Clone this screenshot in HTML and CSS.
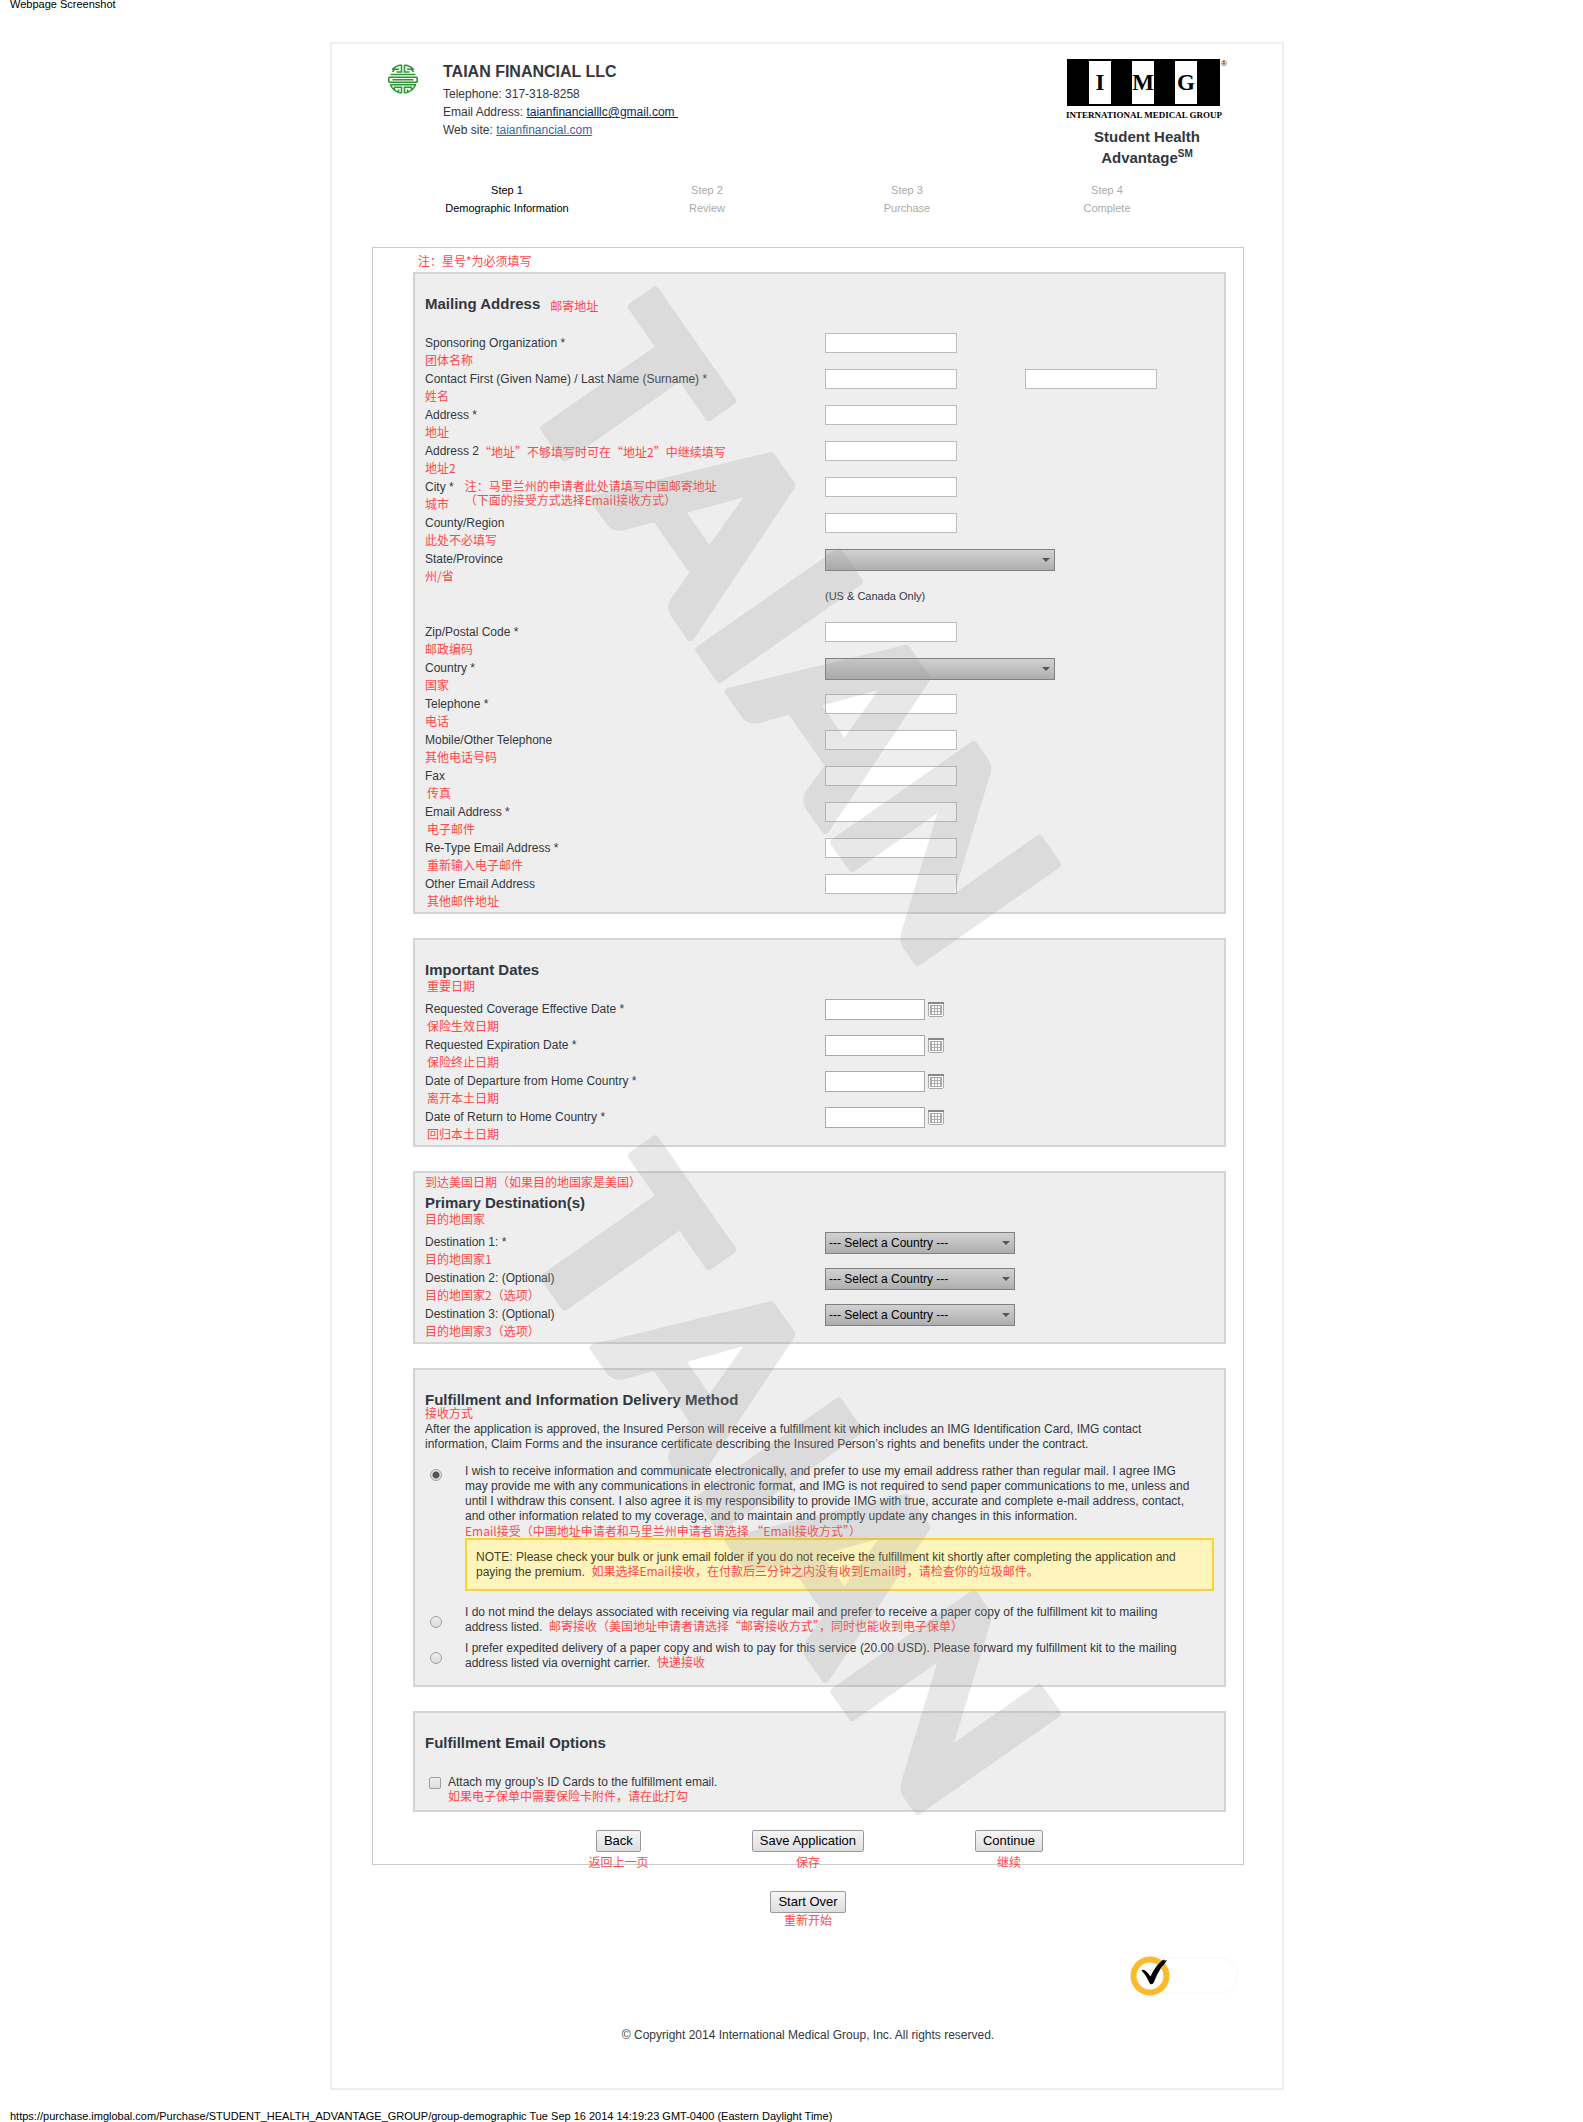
FILE: index.html
```html
<!DOCTYPE html>
<html lang="en">
<head>
<meta charset="utf-8">
<meta name="viewport" content="width=device-width, initial-scale=1">
<title>Student Health Advantage - Demographic Information</title>
<link rel="stylesheet" href="styles.css">
</head>
<body>
<p class="print-line">Webpage Screenshot</p>
<div class="page">
<main class="frame">
  <header class="header">
    <svg class="agent-logo" viewBox="0 0 30 30" role="img" aria-label="Taian Financial emblem">
      <g fill="none" stroke="#2b962f" stroke-width="1.6">
        <path d="M13.500 1v7H8.500M16.500 1v7h5M13.500 1Q8 1.600 4.200 5.600M16.500 1Q22 1.600 25.800 5.600M4.500 8 6.500 5.200H11M25.500 8 23.500 5.200H19"/>
        <path d="M2.600 10.500H27.400M.8 13.300H29.200M4.500 15.800H25.500M.8 18.300H29.200M.8 18.300V13.300M29.200 18.300V13.300M2 20.800H28"/>
        <path d="M13.500 29v-5.800H6.500v3.200M16.500 29v-5.800h7v3.200M13.500 29Q6 28 2.400 21M16.500 29Q24 28 27.600 21M10.500 28v-2.500M19.500 28v-2.500"/>
      </g>
    </svg>
    <address class="agent">
      <strong class="agent-name">TAIAN FINANCIAL LLC</strong>
      <span>Telephone: 317-318-8258</span>
      <span>Email Address: <a class="mail" href="mailto:taianfinancialllc@gmail.com">taianfinancialllc@gmail.com&nbsp;</a></span>
      <span>Web site: <a class="site" href="#">taianfinancial.com</a></span>
    </address>
    <div class="brand">
      <svg class="img-logo" viewBox="0 0 160 62" role="img" aria-label="International Medical Group">
        <rect width="153" height="47"/>
        <path fill="#fff" d="M22 2h22v43H22zM65 2h22v43H65zM108 2h22v43h-22z"/>
        <g font-family="'Liberation Serif', serif" font-weight="bold" text-anchor="middle">
          <g font-size="23"><text x="33" y="31">I</text><text x="76" y="31">M</text><text x="119" y="31">G</text></g>
          <text x="77" y="59" font-size="9">INTERNATIONAL MEDICAL GROUP</text>
        </g>
        <text x="154" y="7" font-size="8" font-family="'Liberation Sans', sans-serif">®</text>
      </svg>
      <h1 class="product">Student Health<br>Advantage<sup>SM</sup></h1>
    </div>
  </header>

  <ol class="steps">
    <li class="current">Step 1<br>Demographic Information</li>
    <li>Step 2<br>Review</li>
    <li>Step 3<br>Purchase</li>
    <li>Step 4<br>Complete</li>
  </ol>

  <form class="form">
    <p class="note required-note" lang="zh-CN">注：星号*为必须填写</p>

    <section class="panel">
      <div class="panel-head inline"><h2>Mailing Address</h2><span class="note" lang="zh-CN">邮寄地址</span></div>
      <div class="row"><div class="name"><label for="org">Sponsoring Organization *</label><span class="note" lang="zh-CN">团体名称</span></div><input id="org" class="text"></div>
      <div class="row"><div class="name"><label for="first">Contact First (Given Name) / Last Name (Surname) *</label><span class="note" lang="zh-CN">姓名</span></div><input id="first" class="text"><input class="text" aria-label="Last Name (Surname)"></div>
      <div class="row"><div class="name"><label for="addr">Address *</label><span class="note" lang="zh-CN">地址</span></div><input id="addr" class="text"></div>
      <div class="row"><div class="name"><span class="line"><label for="addr2">Address 2</label> <span class="note" lang="zh-CN">“地址”不够填写时可在“地址2”中继续填写</span></span><span class="note" lang="zh-CN">地址2</span></div><input id="addr2" class="text"></div>
      <div class="row"><div class="name with-aside"><div><label for="city">City *</label><span class="note" lang="zh-CN">城市</span></div><span class="note aside" lang="zh-CN">注：马里兰州的申请者此处请填写中国邮寄地址<br>（下面的接受方式选择Email接收方式）</span></div><input id="city" class="text"></div>
      <div class="row"><div class="name"><label for="county">County/Region</label><span class="note" lang="zh-CN">此处不必填写</span></div><input id="county" class="text"></div>
      <div class="row"><div class="name"><label for="state">State/Province</label><span class="note" lang="zh-CN">州/省</span></div><span class="select wide"><select id="state"><option></option></select></span></div>
      <div class="row hint-row"><span class="hint">(US &amp; Canada Only)</span></div>
      <div class="row"><div class="name"><label for="zip">Zip/Postal Code *</label><span class="note" lang="zh-CN">邮政编码</span></div><input id="zip" class="text"></div>
      <div class="row"><div class="name"><label for="country">Country *</label><span class="note" lang="zh-CN">国家</span></div><span class="select wide"><select id="country"><option></option></select></span></div>
      <div class="row"><div class="name"><label for="tel">Telephone *</label><span class="note" lang="zh-CN">电话</span></div><input id="tel" class="text"></div>
      <div class="row"><div class="name"><label for="mobile">Mobile/Other Telephone</label><span class="note" lang="zh-CN">其他电话号码</span></div><input id="mobile" class="text"></div>
      <div class="row"><div class="name"><label for="fax">Fax</label><span class="note indent" lang="zh-CN">传真</span></div><input id="fax" class="text"></div>
      <div class="row"><div class="name"><label for="email">Email Address *</label><span class="note indent" lang="zh-CN">电子邮件</span></div><input id="email" class="text"></div>
      <div class="row"><div class="name"><label for="email2">Re-Type Email Address *</label><span class="note indent" lang="zh-CN">重新输入电子邮件</span></div><input id="email2" class="text"></div>
      <div class="row"><div class="name"><label for="email3">Other Email Address</label><span class="note indent" lang="zh-CN">其他邮件地址</span></div><input id="email3" class="text"></div>
    </section>

    <svg class="defs" aria-hidden="true">
      <symbol id="calendar" viewBox="0 0 16 15">
        <path fill="#fff" d="M0 1h16v14H0z"/>
        <path fill="#888" d="M0 0h16v2H0z"/>
        <path fill="#aaa" d="M0 2h1v12H0zM15 2h1v12h-1zM1 14h14v1H1z"/>
        <path fill="#aaa" d="M2 3h12v1H2zM2 6h12v1H2zM2 9h12v1H2zM2 12h12v1H2zM2 3h2v10H2zM6 3h1v10H6zM9 3h1v10H9zM12 3h2v10h-2z"/>
      </symbol>
    </svg>

    <section class="panel">
      <div class="panel-head"><h2>Important Dates</h2><span class="note indent" lang="zh-CN">重要日期</span></div>
      <div class="row"><div class="name"><label for="d1">Requested Coverage Effective Date *</label><span class="note indent" lang="zh-CN">保险生效日期</span></div><span class="date"><input id="d1"><button type="button" aria-label="Pick effective date"><svg><use href="#calendar"/></svg></button></span></div>
      <div class="row"><div class="name"><label for="d2">Requested Expiration Date *</label><span class="note indent" lang="zh-CN">保险终止日期</span></div><span class="date"><input id="d2"><button type="button" aria-label="Pick expiration date"><svg><use href="#calendar"/></svg></button></span></div>
      <div class="row"><div class="name"><label for="d3">Date of Departure from Home Country *</label><span class="note indent" lang="zh-CN">离开本土日期</span></div><span class="date"><input id="d3"><button type="button" aria-label="Pick departure date"><svg><use href="#calendar"/></svg></button></span></div>
      <div class="row"><div class="name"><label for="d4">Date of Return to Home Country *</label><span class="note indent" lang="zh-CN">回归本土日期</span></div><span class="date"><input id="d4"><button type="button" aria-label="Pick return date"><svg><use href="#calendar"/></svg></button></span></div>
    </section>

    <section class="panel led">
      <p class="note lead-note" lang="zh-CN">到达美国日期（如果目的地国家是美国）</p>
      <div class="panel-head"><h2>Primary Destination(s)</h2><span class="note" lang="zh-CN">目的地国家</span></div>
      <div class="row"><div class="name"><label for="c1">Destination 1: *</label><span class="note" lang="zh-CN">目的地国家1</span></div><span class="select"><select id="c1"><option>--- Select a Country ---</option></select></span></div>
      <div class="row"><div class="name"><label for="c2">Destination 2: (Optional)</label><span class="note" lang="zh-CN">目的地国家2（选项）</span></div><span class="select"><select id="c2"><option>--- Select a Country ---</option></select></span></div>
      <div class="row"><div class="name"><label for="c3">Destination 3: (Optional)</label><span class="note" lang="zh-CN">目的地国家3（选项）</span></div><span class="select"><select id="c3"><option>--- Select a Country ---</option></select></span></div>
    </section>

    <section class="panel delivery">
      <div class="panel-head tight"><h2>Fulfillment and Information Delivery Method</h2><span class="note" lang="zh-CN">接收方式</span></div>
      <p class="copy">After the application is approved, the Insured Person will receive a fulfillment kit which includes an IMG Identification Card, IMG contact<br>information, Claim Forms and the insurance certificate describing the Insured Person’s rights and benefits under the contract.</p>
      <div class="option first">
        <input type="radio" name="delivery" id="r1" checked>
        <div>
          <label class="copy" for="r1">I wish to receive information and communicate electronically, and prefer to use my email address rather than regular mail. I agree IMG<br>may provide me with any communications in electronic format, and IMG is not required to send paper communications to me, unless and<br>until I withdraw this consent. I also agree it is my responsibility to provide IMG with true, accurate and complete e-mail address, contact,<br>and other information related to my coverage, and to maintain and promptly update any changes in this information.</label>
          <p class="note choice-note" lang="zh-CN">Email接受（中国地址申请者和马里兰州申请者请选择 “Email接收方式”）</p>
          <p class="alert copy">NOTE: Please check your bulk or junk email folder if you do not receive the fulfillment kit shortly after completing the application and<br>paying the premium.&nbsp; <span class="note" lang="zh-CN">如果选择Email接收，在付款后三分钟之内没有收到Email时，请检查你的垃圾邮件。</span></p>
        </div>
      </div>
      <div class="option second">
        <input type="radio" name="delivery" id="r2">
        <label class="copy" for="r2">I do not mind the delays associated with receiving via regular mail and prefer to receive a paper copy of the fulfillment kit to mailing<br>address listed.&nbsp; <span class="note" lang="zh-CN">邮寄接收（美国地址申请者请选择“邮寄接收方式”，同时也能收到电子保单）</span></label>
      </div>
      <div class="option third">
        <input type="radio" name="delivery" id="r3">
        <label class="copy" for="r3">I prefer expedited delivery of a paper copy and wish to pay for this service (20.00 USD). Please forward my fulfillment kit to the mailing<br>address listed via overnight carrier.&nbsp; <span class="note" lang="zh-CN">快递接收</span></label>
      </div>
    </section>

    <section class="panel">
      <div class="panel-head"><h2>Fulfillment Email Options</h2></div>
      <div class="check">
        <input type="checkbox" id="cards">
        <label class="copy" for="cards">Attach my group’s ID Cards to the fulfillment email.<br><span class="note" lang="zh-CN">如果电子保单中需要保险卡附件，请在此打勾</span></label>
      </div>
    </section>

    <div class="actions">
      <div class="action"><button type="button" class="btn">Back</button><span class="note" lang="zh-CN">返回上一页</span></div>
      <div class="action"><button type="button" class="btn">Save Application</button><span class="note" lang="zh-CN">保存</span></div>
      <div class="action"><button type="submit" class="btn">Continue</button><span class="note" lang="zh-CN">继续</span></div>
    </div>
  </form>

  <div class="restart"><button type="button" class="btn">Start Over</button><span class="note" lang="zh-CN">重新开始</span></div>

  <svg class="seal" viewBox="0 0 108 40" role="img" aria-label="Site security check">
    <path fill="none" stroke="#fafafa" stroke-width="1.500" d="M20 2H90a17.500 17.500 0 0 1 0 35H20"/>
    <circle cx="20" cy="20" r="16.500" fill="#fff" stroke="#fdb92e" stroke-width="6"/>
    <path d="M11.500 14.500q1.500-1.500 3.500 0 3.500 2.500 5.500 6Q25 10.500 32 4.500l2-1 .5 1.200 2.500-.7-1.500 2.500-1.500 2-2.500 2.500Q27 18 23.500 27q-2.500 2.500-4 0Q16 19 11.500 14.500z"/>
  </svg>

  <footer class="copyright">© Copyright 2014 International Medical Group, Inc. All rights reserved.</footer>

  <svg class="watermark" aria-hidden="true">
    <text transform="translate(182 341) rotate(55)">TAIAN</text>
    <text transform="translate(182 1190) rotate(55)">TAIAN</text>
  </svg>
</main>
</div>
<p class="print-line print-url">https://purchase.imglobal.com/Purchase/STUDENT_HEALTH_ADVANTAGE_GROUP/group-demographic Tue Sep 16 2014 14:19:23 GMT-0400 (Eastern Daylight Time)</p>
</body>
</html>
```
FILE: styles.css
```css
* { box-sizing: border-box; }

body {
  margin: 0;
  background: #fff;
  color: #333740;
  font: 12px/18px "Liberation Sans", "Noto Sans CJK SC", sans-serif;
}

p, h1, h2, ol { margin: 0; padding: 0; }

.print-line {
  padding-left: 10px;
  color: #000;
  font-size: 11px;
  line-height: 8px;
}

.print-url { padding-top: 20px; line-height: 12px; }

.page { padding: 34px 0 0 31px; }

.frame {
  position: relative;
  max-width: 954px;
  margin: 0 auto;
  padding: 15px 38px 44px 40px;
  border: 2px solid #eee;
}

.note {
  color: #ff4848;
  font-family: "Noto Sans CJK SC", sans-serif;
  font-size: 12px;
  line-height: 14px;
}

.indent { padding-left: 2px; }

/* Header */
.header {
  display: flex;
  align-items: flex-start;
  padding: 0 17px 0 16px;
}

.agent-logo { width: 30px; height: 30px; margin: 5px 25px 0 0; }

.agent {
  display: flex;
  flex-direction: column;
  flex: 1;
  padding-top: 2px;
  font-style: normal;
}

.agent-name { padding-bottom: 2px; font-size: 16px; line-height: 22px; }

.mail { color: #0a2a66; }
.site { color: #3a64a0; }

.brand { width: 160px; text-align: center; }

.img-logo { display: block; width: 160px; height: 62px; overflow: visible; }

.product { padding-top: 5px; font-size: 15px; line-height: 21px; }

.product sup { font-size: 10px; line-height: 10px; }

.steps {
  display: grid;
  grid-template-columns: repeat(4, 1fr);
  max-width: 800px;
  margin: 13px 36px 30px 35px;
  color: #aaa;
  font-size: 11px;
  text-align: center;
  list-style: none;
}

.steps .current { color: #000; }

/* Form */
.form {
  padding: 6px 17px 12px 40px;
  border: 1px solid #ccc;
}

.required-note { padding: 0 0 4px 5px; }

.panel {
  margin-bottom: 24px;
  padding: 21px 10px 2px;
  border: 2px solid #d4d4d4;
  background: #eee;
}

.panel-head {
  display: flex;
  flex-direction: column;
  min-height: 38px;
}

.panel-head.inline { flex-direction: row; gap: 10px; }
.panel-head.inline .note { line-height: 22px; }
.panel-head.tight { min-height: 31px; }
.panel-head.tight .note { line-height: 8px; }

h2 { font-size: 15px; line-height: 18px; }

.led { padding-top: 0; }
.lead-note { padding-bottom: 3px; line-height: 18px; }

.row {
  display: grid;
  grid-template-columns: 400px 200px 1fr;
  align-items: start;
  min-height: 36px;
}

.hint-row { min-height: 37px; }
.hint { grid-column: 2; font-size: 11px; line-height: 22px; }

.name label, .name .note { display: block; }
.name label { line-height: 21px; }
.name .note { line-height: 12px; }
.name .line { display: flex; }
.name .line .note { line-height: 21px; }
.with-aside { display: flex; gap: 11px; }
.with-aside .aside { padding-top: 2px; line-height: 14px; }

.text, .date input {
  width: 132px;
  height: 20px;
  padding: 1px 3px;
  border: 1px solid #bbb;
  background: #fff;
}

.date { display: flex; gap: 3px; align-items: flex-start; }
.date input { width: 100px; height: 21px; border-color: #aaa; }
.date button { margin-top: 3px; padding: 0; border: 0; background: none; }
.date svg { display: block; width: 16px; height: 15px; }

.defs { display: none; }

.select { position: relative; width: 190px; }
.select.wide { width: 230px; }

.select select {
  display: block;
  width: 100%;
  height: 22px;
  padding: 0 3px;
  border: 1px solid #808080;
  border-radius: 0;
  appearance: none;
  background: linear-gradient(#d2d2d2, #aeaeae);
  color: #000;
  font: 12px/20px "Liberation Sans", sans-serif;
}

.select::after {
  content: "";
  position: absolute;
  right: 5px;
  top: 9px;
  border: 4px solid transparent;
  border-top-color: #555;
  border-bottom: 0;
}

/* Delivery options */
.copy { display: block; line-height: 15px; white-space: nowrap; }
.copy .note { line-height: 0; }
.choice-note { white-space: nowrap; }

.delivery { padding-bottom: 14px; }

.option { display: grid; grid-template-columns: 40px 1fr; align-items: start; }
.option input { margin: 11px 0 0 5px; }
.option.first { padding-top: 12px; }
.option.first input { margin-top: 5px; }
.option.second { padding-top: 14px; }
.option.third { padding-top: 6px; }

.alert {
  padding: 10px 9px 9px;
  border: 2px solid #fdd32a;
  background: #fff4bb;
  color: #443e2c;
}

input[type="radio"], input[type="checkbox"] {
  width: 12px;
  height: 12px;
  border: 1px solid #a0a0a0;
  appearance: none;
  background: linear-gradient(#eee, #dcdcdc);
}

input[type="radio"] { border-radius: 50%; }

input[type="radio"]:checked {
  background: radial-gradient(circle, #555 0 3px, #e4e4e4 4px);
}

input[type="checkbox"] { margin: 2px 7px 0 4px; border-radius: 2px; }

.check { display: flex; align-items: flex-start; padding: 3px 0; }

/* Buttons */
.btn {
  height: 22px;
  padding: 0 7px;
  border: 1px solid #999;
  border-radius: 2px;
  background: linear-gradient(#f6f6f6, #dedede);
  color: #000;
  font: 13px/20px "Liberation Sans", sans-serif;
}

.actions { display: flex; justify-content: center; gap: 111px; margin-top: -6px; }

.action { position: relative; }

.action .note {
  position: absolute;
  top: 25px;
  left: 50%;
  transform: translateX(-50%);
  white-space: nowrap;
}

.restart {
  display: flex;
  flex-direction: column;
  align-items: center;
  padding: 26px 0 29px;
}

.seal { display: block; width: 108px; height: 40px; margin: 0 6px 0 auto; }

.copyright { padding-top: 30px; text-align: center; }

/* Diagonal watermark laid over the sheet */
.watermark {
  position: absolute;
  inset: 0;
  width: 100%;
  height: 100%;
  fill: #969696;
  stroke: #969696;
  stroke-width: 8px;
  stroke-linejoin: round;
  opacity: 0.21;
  font: 900 234px/1 Lato, sans-serif;
  font-kerning: none;
  pointer-events: none;
}
```
